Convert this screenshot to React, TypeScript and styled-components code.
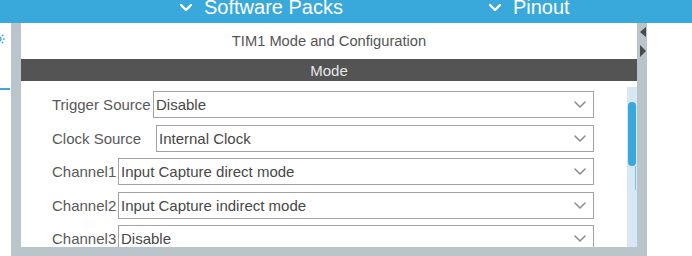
import React from 'react';
import styled, { createGlobalStyle } from 'styled-components';

const GlobalStyle = createGlobalStyle`
  html, body {
    margin: 0;
    padding: 0;
    background: #ffffff;
  }
  body {
    font-family: 'Liberation Sans', Arial, sans-serif;
  }
`;

const Page = styled.div`
  width: 692px;
  height: 256px;
  overflow: hidden;
  display: flex;
  flex-direction: column;
  background: #fff;
`;

const TopBar = styled.div`
  height: 23px;
  flex: none;
  background: #39a9dc;
  display: flex;
  align-items: flex-start;
  padding-left: 180px;
  gap: 146px;
  overflow: hidden;
`;

const NavItem = styled.div`
  display: flex;
  align-items: flex-start;
  gap: 12px;
  color: #fff;
  font-size: 20px;
  line-height: 20px;
  margin-top: -3px;
  white-space: nowrap;
  svg {
    margin-top: 7px;
  }
`;

const Body = styled.div`
  flex: 1;
  display: flex;
`;

const LeftStrip = styled.div`
  width: 11px;
  flex: none;
  display: flex;
  flex-direction: column;
  padding-top: 9px;
  overflow: hidden;
  svg {
    margin-left: -8px;
  }
`;

const LeftTab = styled.div`
  margin-top: 42px;
  height: 2px;
  width: 10px;
  background: #39a9dc;
`;

const Frame = styled.div`
  width: 636px;
  flex: none;
  display: flex;
  background: #b9c4cb;
  padding-left: 10px;
  box-sizing: border-box;
`;

const Panel = styled.div`
  flex: 1;
  height: 224px;
  background: #fff;
  display: flex;
  flex-direction: column;
`;

const Title = styled.div`
  height: 36px;
  display: flex;
  align-items: center;
  justify-content: center;
  font-size: 14.7px;
  color: #555;
`;

const ModeBar = styled.div`
  height: 22px;
  background: #535453;
  color: #e6e6e6;
  font-size: 15px;
  display: flex;
  align-items: center;
  justify-content: center;
`;

const Content = styled.div`
  flex: 1;
  display: flex;
  padding-top: 6px;
  overflow: hidden;
`;

const Form = styled.div`
  flex: 1;
  display: flex;
  flex-direction: column;
  gap: 6.5px;
  padding: 4px 33px 0 31px;
`;

const Row = styled.div`
  display: flex;
  align-items: center;
  flex: none;
`;

const Label = styled.div<{ $width: number }>`
  width: ${(p) => p.$width}px;
  flex: none;
  font-size: 15px;
  color: #595959;
  white-space: nowrap;
`;

const SelectBox = styled.div`
  flex: 1;
  height: 27px;
  box-sizing: border-box;
  border: 1px solid #a3a3a3;
  display: flex;
  align-items: center;
  justify-content: space-between;
  padding: 0 7px 0 2px;
  font-size: 15px;
  color: #474747;
`;

const Track = styled.div`
  width: 10px;
  flex: none;
  background: #d8e7f4;
  display: flex;
  flex-direction: column;
`;

const Thumb = styled.div`
  margin: 15px 0 0 1px;
  width: 8px;
  height: 64px;
  border-radius: 4px;
  background: #39a9dc;
`;

const ThumbTail = styled.div`
  margin-left: 8px;
  width: 1px;
  height: 24px;
  background: #7cc3e8;
`;

const Handle = styled.div`
  width: 10px;
  flex: none;
  display: flex;
  flex-direction: column;
  align-items: center;
  padding-top: 4px;
  gap: 8px;
`;

const Arrow = styled.div<{ $dir: 'left' | 'right' }>`
  width: 0;
  height: 0;
  border-top: 5px solid transparent;
  border-bottom: 5px solid transparent;
  ${(p) =>
    p.$dir === 'left'
      ? 'border-right: 6px solid #484a4b; margin-left: 2px;'
      : 'border-left: 6px solid #484a4b; border-top-width: 6px; border-bottom-width: 6px; margin-left: 2px;'}
`;

const Chevron = ({ color, width, stroke }: { color: string; width: number; stroke: number }) => (
  <svg width={width} height={width / 2 + 1} viewBox={`0 0 ${width} ${width / 2 + 1}`} fill="none">
    <polyline
      points={`1,1 ${width / 2},${width / 2} ${width - 1},1`}
      stroke={color}
      strokeWidth={stroke}
      strokeLinecap="round"
      strokeLinejoin="round"
    />
  </svg>
);

const Gear = () => (
  <svg width="14" height="14" viewBox="0 0 24 24" fill="none" stroke="#39a9dc" strokeWidth="2.5">
    <circle cx="12" cy="12" r="3.5" />
    <path d="M12 2v3M12 19v3M2 12h3M19 12h3M4.9 4.9l2.1 2.1M17 17l2.1 2.1M4.9 19.1L7 17M17 7l2.1-2.1" />
  </svg>
);

const rows = [
  { label: 'Trigger Source', width: 101, value: 'Disable' },
  { label: 'Clock Source', width: 104, value: 'Internal Clock' },
  { label: 'Channel1', width: 66, value: 'Input Capture direct mode' },
  { label: 'Channel2', width: 66, value: 'Input Capture indirect mode' },
  { label: 'Channel3', width: 66, value: 'Disable' },
];

export default function App() {
  return (
    <Page>
      <GlobalStyle />
      <TopBar>
        <NavItem>
          <Chevron color="#fff" width={12} stroke={2.4} />
          Software Packs
        </NavItem>
        <NavItem>
          <Chevron color="#fff" width={12} stroke={2.4} />
          Pinout
        </NavItem>
      </TopBar>
      <Body>
        <LeftStrip>
          <Gear />
          <LeftTab />
        </LeftStrip>
        <Frame>
          <Panel>
            <Title>TIM1 Mode and Configuration</Title>
            <ModeBar>Mode</ModeBar>
            <Content>
              <Form>
                {rows.map((r) => (
                  <Row key={r.label}>
                    <Label $width={r.width}>{r.label}</Label>
                    <SelectBox>
                      {r.value}
                      <Chevron color="#8c8c8c" width={12} stroke={1.5} />
                    </SelectBox>
                  </Row>
                ))}
              </Form>
              <Track>
                <Thumb />
                <ThumbTail />
              </Track>
            </Content>
          </Panel>
          <Handle>
            <Arrow $dir="left" />
            <Arrow $dir="right" />
          </Handle>
        </Frame>
      </Body>
    </Page>
  );
}
